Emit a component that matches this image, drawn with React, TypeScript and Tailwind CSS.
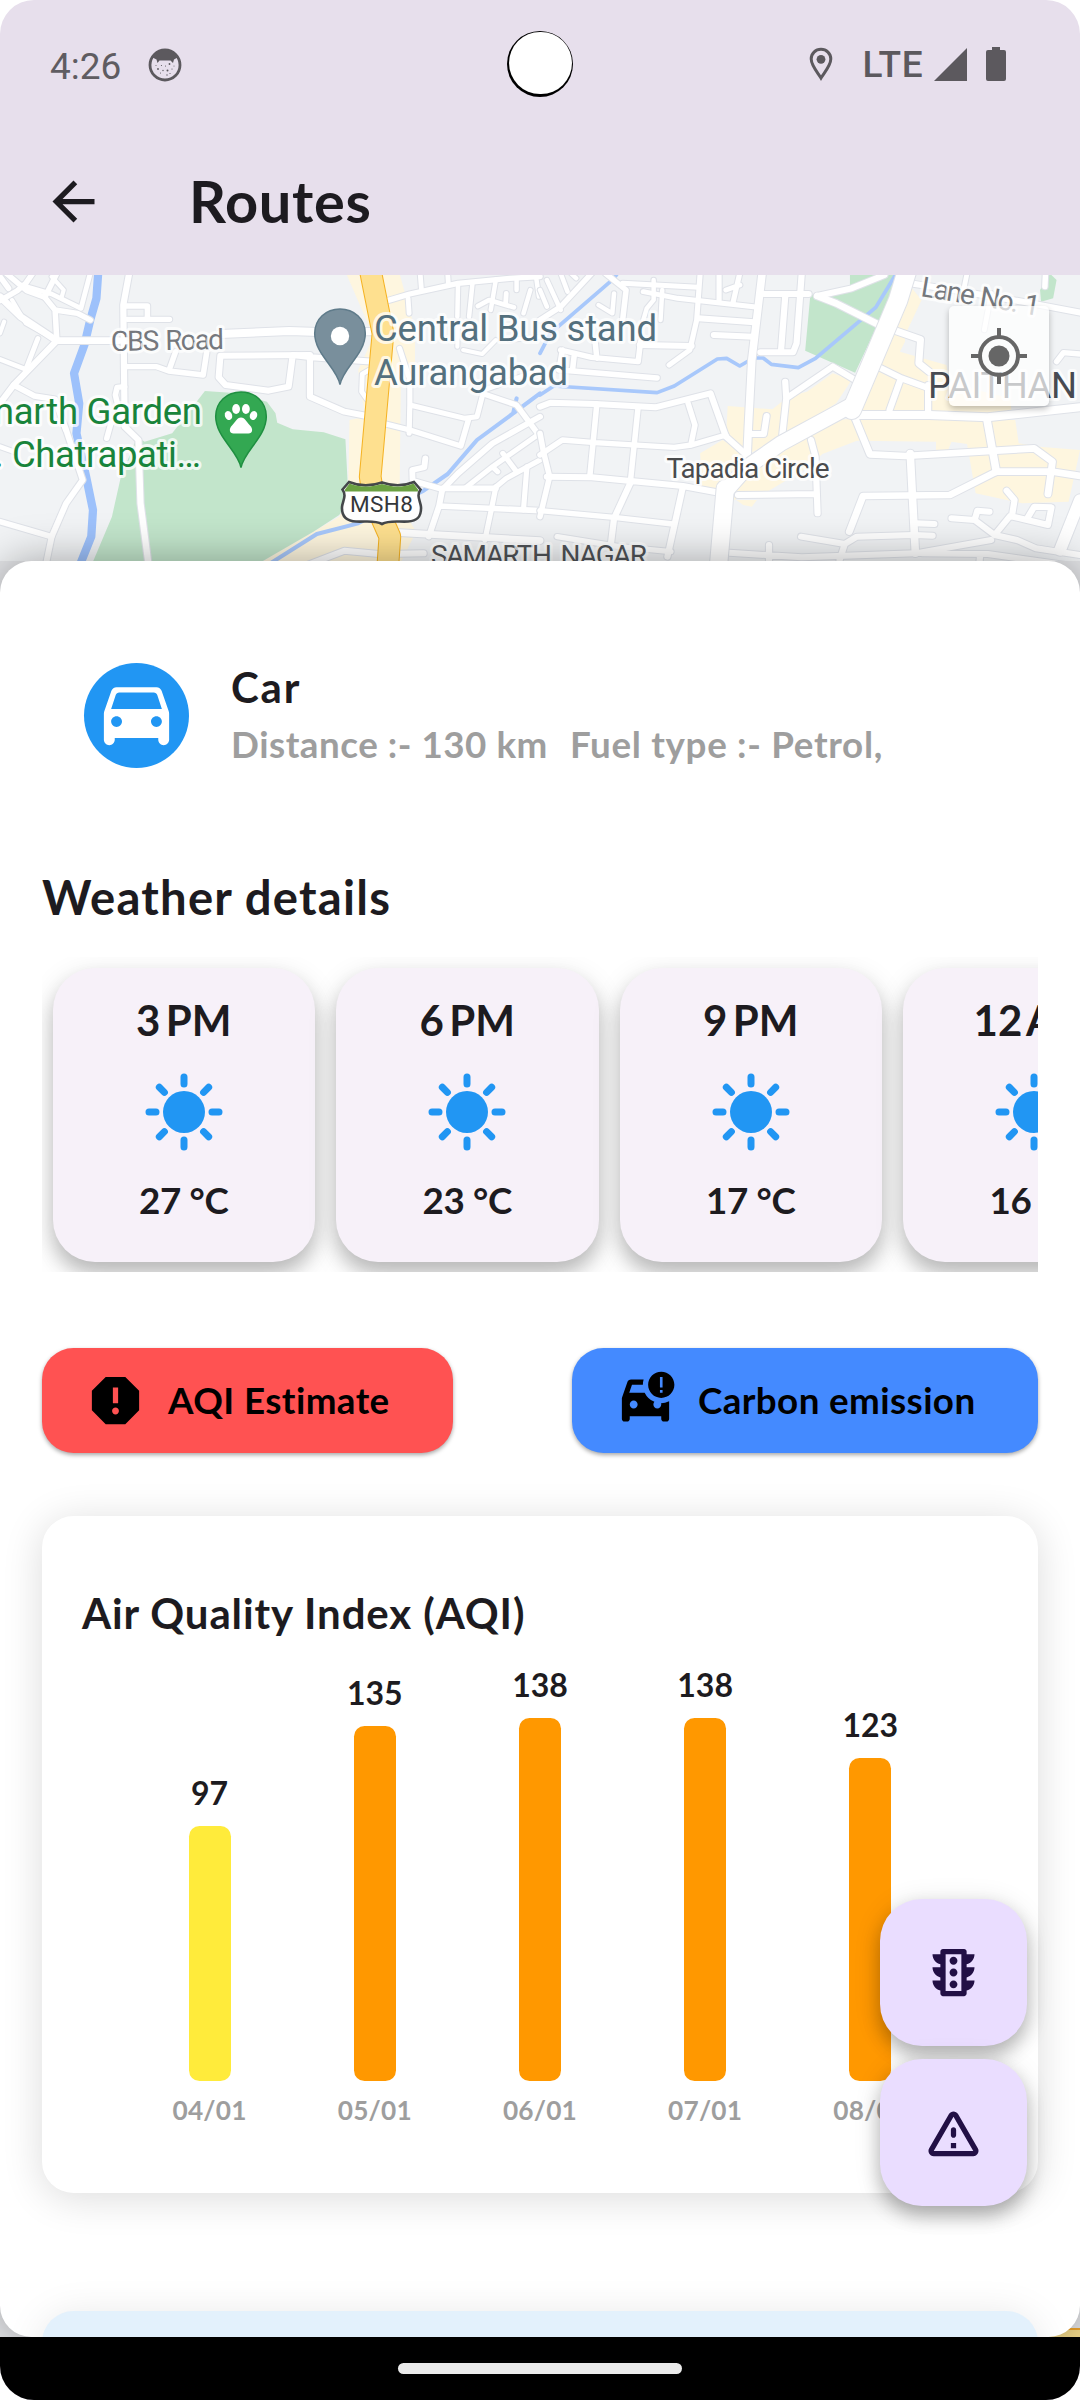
import type { ReactNode } from "react";
import { MdArrowBack, MdCarCrash, MdOutlineTraffic, MdReport } from "react-icons/md";

/* ---------- Map data ---------- */

type Line = [d: string, width: number];

// Tiles are digitised at roughly three units per pixel.
const WEST_ROADS: Line[] = [
  ["M0 80L60 140L165 212L345 212", 20],
  ["M640 192L840 183L925 186", 24],
  ["M1055 185L1095 185", 22],
  ["M0 400L40 345L165 212", 18],
  ["M0 268L75 298L110 205", 14],
  ["M40 345L100 378L160 388L192 480L240 630L192 700L150 800L132 890", 17],
  ["M0 755L150 800", 17],
  ["M0 92L50 62L75 40L95 10", 16],
  ["M18 10L78 62L130 82L165 10", 16],
  ["M60 45L150 72L235 115L262 10", 14],
  ["M0 20L25 55M130 82L160 120L165 212M160 120L225 130L262 150", 16],
  ["M150 20L185 60L178 85M0 190L12 155M35 90L75 160L165 212", 12],
  ["M375 10L358 105L362 470L402 510L408 700L432 890", 18],
  ["M360 108L428 108L428 148M370 148L492 148", 16],
  ["M365 290L455 290L490 303L590 315L600 248M490 303L510 245", 16],
  ["M900 255L640 257L635 322L655 345L780 362L838 350L850 255", 18],
  ["M850 255L905 262L1095 276M900 262L900 380L1000 425L1065 438", 18],
  ["M1072 300L1052 312L1050 365L1066 388", 14],
  ["M362 350L340 352L335 375L350 440L322 460L310 505", 16],
  ["M1125 92L1190 72L1330 40L1480 25L1568 20", 16],
  ["M1220 10L1224 62M1300 10L1302 45M1185 85L1188 130", 14],
  ["M1330 40L1328 140M1372 40L1362 140M1440 28L1425 120M1500 25L1500 60M1540 60L1520 130M1555 10L1565 80", 13],
  ["M1470 70L1468 105L1420 90L1388 108M1468 105L1492 112", 14],
  ["M1345 240L1400 252L1440 210M1330 160L1328 230M1568 200L1480 210", 12],
  ["M1160 235L1190 330L1190 402L1188 490M1190 405L1350 445L1385 440L1405 360L1568 300", 15],
  ["M1120 462L1190 480L1338 528L1360 450", 16],
  ["M1405 372L1500 405L1568 500", 16],
  ["M1235 565L1232 592L1197 600L1198 632L1285 658L1330 610L1430 520L1568 440", 17],
  ["M1350 655L1430 590L1568 490M1430 590L1445 605M1460 550L1500 605M1435 655L1470 625L1568 570", 15],
  ["M1285 655L1440 655M1285 655L1275 708L1245 800M1275 708L1568 722", 17],
  ["M1440 650L1428 712L1408 810M1530 590L1520 720", 15],
  ["M1160 788L1568 812", 20],
  ["M880 890L1000 842L1100 852M1120 852L1230 850", 18],
  ["M190 480L170 420M0 530L40 545", 14],
];

const EAST_ROADS: Line[] = [
  ["M190 10L250 60L240 150M150 10L60 110L0 150", 16],
  ["M0 60L20 110M20 30L60 120M60 10L80 65M90 10L105 25", 13],
  ["M240 40L460 52M300 65L400 85L620 110", 15],
  ["M465 10L455 150L435 240L375 285M520 10L520 90M580 10L560 100M540 60L580 45", 15],
  ["M330 30L330 90L310 115L300 150M215 70L210 130L170 105M355 60L350 150", 13],
  ["M460 145L622 157M505 195L620 200M290 225L440 228", 18],
  ["M645 10L615 270L605 470L600 590", 22],
  ["M650 72L780 72M640 247L735 247L745 220L760 10M712 80L700 240", 18],
  ["M60 240L150 262L285 275L292 215M100 250L95 295M160 215L165 265M60 300L340 324M65 240L55 300", 16],
  ["M0 410L30 398L160 402L335 412L495 370L540 500L605 560", 18],
  ["M0 555L65 510L160 518L390 532L440 525L540 495M430 400L450 465L438 525", 16],
  ["M165 402L145 615M285 410L262 640M0 490L10 545L28 620L0 740", 16],
  ["M20 620L150 622L415 648L540 672M262 640L215 745L205 830M415 650L370 860", 18],
  ["M0 722L215 742L385 762M50 800L230 830L380 845", 16],
  ["M805 78L860 100L985 165L1105 208L1100 280L1130 305", 20],
  ["M805 78L905 55L1000 15", 18],
  ["M1075 40L1200 60L1400 95L1568 128", 18],
  ["M1240 10L1230 60M1310 70L1290 180", 14],
  ["M1468 5L1466 50M1500 275L1520 248L1568 252", 16],
  ["M985 292L1050 325L1130 355M1048 325L1015 420M1127 345L1127 425", 18],
  ["M850 290L915 330M850 290L715 385L703 500M712 335L715 385", 18],
  ["M658 438L650 492L615 492", 18],
  ["M920 435L1130 435L1300 442L1568 412", 24],
  ["M915 445L958 553L1060 558L1435 535L1488 575L1475 672", 20],
  ["M1298 450L1325 605M1075 550L1090 850", 22],
  ["M898 785L938 678L1190 675L1325 605L1490 605L1568 618", 20],
  ["M787 510L800 560L806 730M575 675L800 672", 18],
  ["M1568 690L1510 840", 34],
  ["M758 800L885 822L920 800L1085 795L1140 797M1090 760L1145 762M885 822L870 870", 18],
  ["M1195 745L1262 750L1320 795L1385 810L1440 835L1568 855M1262 750L1270 722L1305 725", 18],
  ["M1320 795L1365 738L1475 765L1485 712L1435 710L1415 745M1370 740L1378 690L1355 662", 18],
  ["M550 848L760 862L1090 850L1310 810M665 825L665 870M1110 850L1300 852L1560 890M1278 855L1275 890", 18],
];

const EAST_ARTERIAL: Line[] = [
  ["M1065 5L1040 90L905 420", 54],
  ["M905 405L870 425L700 520L600 592L540 662", 44],
  ["M538 655L518 890", 50],
];

const WEST_PARKS = [
  "M270 875L325 740L350 625L398 500L420 515L500 490L595 363L690 370L775 395L800 430L805 458L850 478L940 487L1003 508L1012 690L985 735L910 785L760 875Z",
];
const EAST_PARKS = [
  "M900 10L900 60L785 75L770 242L915 308L1050 10Z",
  "M1480 10L1500 30L1490 85L1455 95L1452 60Z",
];
const WEST_COMMERCIAL = [
  "M1005 10L1085 200L1040 300L1060 440L1015 450L1010 700L985 740L760 875L1165 875L1208 785L1160 700L1165 240L1205 330L1205 180L1160 10Z",
];
const EAST_COMMERCIAL = [
  "M1080 55L1108 90L1060 195L1060 215L1045 245L1180 285L1190 340L1365 385L1370 430L1140 430L935 420L1030 170Z",
  "M850 310L905 330L860 400L705 500L600 555L540 500L545 408L675 418L720 380L775 365Z",
  "M930 445L1380 450L1390 520L1450 530L1568 540L1535 695L1400 700L1265 670L1240 522L1195 515L1185 540L1150 540L1150 515L920 512L820 552L780 590L660 665L560 690L470 650L465 550L530 510L610 560L700 520L860 450Z",
  "M570 690L630 690L615 710L590 705Z",
];

const Tile = ({ x, children }: { x: number; children: ReactNode }) => (
  <g transform={`translate(${x} -5) scale(0.34439 0.33333)`} fill="none" strokeLinecap="round" strokeLinejoin="round">
    {children}
  </g>
);

const Roads = ({ lines }: { lines: Line[] }) => (
  <>
    {lines.map(([d, w]) => (
      <path key={`c${d}`} d={d} stroke="#dfe2e8" strokeWidth={w + 6} />
    ))}
    {lines.map(([d, w]) => (
      <path key={`r${d}`} d={d} stroke="#ffffff" strokeWidth={w} />
    ))}
  </>
);

const Pin = ({ x, y, fill, stroke, children }: { x: number; y: number; fill: string; stroke: string; children: ReactNode }) => (
  <g transform={`translate(${x} ${y})`}>
    <path d="M0 49.500C-3 33-25.300 19-25.300-1.500C-25.300-16-14-26 0-26S25.300-16 25.300-1.500C25.300 19 3 33 0 49.500Z" fill={fill} stroke={stroke} strokeWidth="1.500" />
    {children}
  </g>
);

const HALO = "[paint-order:stroke] stroke-white/75 stroke-[6px] [stroke-linejoin:round]";

function MapView() {
  return (
    <svg className="absolute inset-x-0 top-0 h-[286px] w-full font-['Roboto',sans-serif] font-normal" viewBox="0 0 1080 286" preserveAspectRatio="none">
      <rect width="1080" height="286" fill="#f1f3f5" />
      <Tile x={0}>
        {WEST_COMMERCIAL.map((d) => <path key={d} d={d} fill="#fef6df" />)}
        {WEST_PARKS.map((d) => <path key={d} d={d} fill="#c2e5cb" />)}
        <path d="M285 10L280 85L262 150L245 225L215 310L230 400L222 490L250 620L270 720L265 800L230 890" stroke="#9dc1fb" strokeWidth="24" />
        <path d="M785 880L920 792L1040 760L1230 662L1300 612L1385 510L1490 430L1568 370M1500 385L1490 430" stroke="#a8c8fb" strokeWidth="12" />
        <Roads lines={WEST_ROADS} />
        <path d="M1076 5L1112 190L1075 620L1085 690L1132 800L1126 890" stroke="#f5b324" strokeWidth="66" strokeLinecap="butt" />
        <path d="M1076 5L1112 190L1075 620L1085 690L1132 800L1126 890" stroke="#fee08f" strokeWidth="60" strokeLinecap="butt" />
      </Tile>
      <Tile x={540}>
        {EAST_COMMERCIAL.map((d) => <path key={d} d={d} fill="#fef6df" />)}
        {EAST_PARKS.map((d) => <path key={d} d={d} fill="#c2e5cb" />)}
        <path d="M0 375L40 348L340 368L390 348L515 267L542 265L580 288L620 264L648 264L672 283L750 293L800 265L975 112L1035 10M0 250L30 190L215 25L225 10" stroke="#a8c8fb" strokeWidth="11" />
        <Roads lines={EAST_ROADS} />
        <Roads lines={EAST_ARTERIAL} />
      </Tile>

      <g fontSize="28" className={HALO}>
        <text x="111" y="76" fill="#75787d" textLength="113" wordSpacing="3" transform="rotate(-1 112 76)">CBS Road</text>
        <text x="666.500" y="203" fill="#4a4b4d" textLength="163">Tapadia Circle</text>
        <text x="431" y="290" fill="#505357" textLength="216" wordSpacing="5">SAMARTH NAGAR</text>
        <text x="920" y="21" fill="#75787d" textLength="120" wordSpacing="3" transform="rotate(9.500 920 21)">Lane No. 1</text>
      </g>
      <g fontSize="36.500" className={HALO}>
        <text x="374" y="66" fill="#54707e" textLength="283">Central Bus stand</text>
        <text x="374" y="109.500" fill="#54707e" textLength="194">Aurangabad</text>
        <text x="-18" y="149" fill="#19843b" textLength="220">marth Garden</text>
        <text x="-6" y="192" fill="#19843b" textLength="207" xmlSpace="preserve">. Chatrapati…</text>
        <text x="928" y="123" fill="#484b52" textLength="149">PAITHAN</text>
      </g>

      <Pin x={340} y={60} fill="#798f9c" stroke="#5f7b8a"><circle cy="1" r="9.200" fill="#fff" /></Pin>
      <Pin x={241} y={143} fill="#33a852" stroke="#1f8f41">
        <g fill="#fff" transform="translate(0 1.500)">
          <ellipse cx="-4.900" cy="-10.500" rx="3.900" ry="5" />
          <ellipse cx="4.900" cy="-10.500" rx="3.900" ry="5" />
          <ellipse cx="-12.500" cy="-4" rx="3.600" ry="4.600" transform="rotate(-20 -12.500 -4)" />
          <ellipse cx="12.500" cy="-4" rx="3.600" ry="4.600" transform="rotate(20 12.500 -4)" />
          <path d="M0-2C4-2 6 3 9 6C12.500 9.500 11.500 14 7.500 14H-7.500C-11.500 14-12.500 9.500-9 6C-6 3-4-2 0-2Z" />
        </g>
      </Pin>

      <path d="M349 207L342.500 214.500C347 221 342.500 226 342 232C341.500 242 347 246 356 246.500C366 247 375 245 382 249C389 245 398 247 408 246.500C417 246 421.500 242 421 232C420.500 226 416 221 420.500 214.500L414 207C402 212 392 211 382 207.500C372 211 361 212 349 207Z" fill="#fff" stroke="#44474a" strokeWidth="2.600" />
      <path d="M349.500 208.500L345 214.500V216.500H418V214.500L413.500 208.500C402 213 392 212 382 209C372 212 361 213 349.500 208.500Z" fill="#6ba142" />
      <text x="350" y="237" fontSize="22.500" fill="#33363a" textLength="63">MSH8</text>
    </svg>
  );
}

/* ---------- Icons ---------- */

const CarIcon = () => (
  <svg viewBox="0 0 24 24" className="size-[87px] fill-white">
    <path d="M18.920 6.010C18.720 5.420 18.160 5 17.500 5h-11c-.66 0-1.210.42-1.420 1.010L3.110 11.680c-.07.21-.11.43-.11.66v7.160c0 .83.67 1.500 1.500 1.500S6 20.330 6 19.500V19h12v.5c0 .82.67 1.500 1.500 1.500.82 0 1.500-.67 1.500-1.500v-7.160c0-.22-.04-.45-.11-.66l-1.970-5.670zM6.500 16c-.83 0-1.500-.67-1.500-1.500S5.670 13 6.500 13s1.500.67 1.500 1.500S7.330 16 6.500 16zm11 0c-.83 0-1.500-.67-1.500-1.500s.67-1.500 1.500-1.500 1.500.67 1.500 1.500-.67 1.500-1.500 1.500zM5 11l1.270-3.820c.14-.4.52-.68.95-.68h9.560c.43 0 .81.28.95.68L19 11H5z" />
  </svg>
);

const SunIcon = () => (
  <svg viewBox="-12 -12 24 24" className="size-[84px] shrink-0 fill-[#2196f3] stroke-[#2196f3]" strokeLinecap="round" strokeWidth="2">
    <circle r="6" stroke="none" />
    <path d="M0-10V-8M0 8V10M-10 0H-8M8 0H10M-7.050-7.050L-5.600-5.600M7.050-7.050L5.600-5.600M-7.050 7.050L-5.600 5.600M7.050 7.050L5.600 5.600" />
  </svg>
);

const WarningIcon = () => (
  <svg viewBox="0 0 24 24" className="size-[63px] fill-[#220f45]">
    <path d="M12 5.990L19.530 19H4.470L12 5.990M2.740 18c-.77 1.330.19 3 1.730 3h15.060c1.540 0 2.500-1.670 1.730-3L13.730 4.990c-.77-1.330-2.690-1.330-3.460 0L2.740 18zM11 11v2c0 .55.45 1 1 1s1-.45 1-1v-2c0-.55-.45-1-1-1s-1 .45-1 1zm0 5h2v2h-2z" />
  </svg>
);

const FaceIcon = () => (
  <svg viewBox="0 0 34 34" className="size-[34px]">
    <circle cx="17" cy="17" r="15" fill="none" stroke="#5c595e" strokeWidth="2.800" />
    <path d="M4.500 9.500C8 4 12 2 17 2S26 4 29.500 9.500L26 11.500L25 15L22.500 12.500H11.500L9.500 15L8.500 11.500Z" fill="#5c595e" />
    <g fill="#5c595e">
      <circle cx="10" cy="21" r=".9" /><circle cx="13.500" cy="17.500" r=".6" /><circle cx="15" cy="22.500" r=".7" />
      <circle cx="19.500" cy="22.500" r="1" /><circle cx="21.500" cy="16" r=".9" /><circle cx="24" cy="21" r=".6" />
      <circle cx="17.500" cy="18" r=".6" /><circle cx="12.500" cy="25" r=".6" /><circle cx="19" cy="27" r=".7" /><circle cx="8" cy="17.500" r=".5" /><circle cx="26" cy="18" r=".5" /><circle cx="22" cy="25.500" r=".6" />
    </g>
  </svg>
);

const LocateIcon = () => (
  <svg viewBox="-28 -28 56 56" className="size-[56px] stroke-[#666]" strokeWidth="4" fill="none">
    <circle r="19" />
    <circle r="10.500" fill="#666" stroke="none" />
    <path d="M0-28V-20M0 20V28M-28 0H-20M20 0H28" />
  </svg>
);

/* ---------- Sections ---------- */

function StatusBar() {
  return (
    <div className="flex h-[128px] shrink-0 items-start font-['Roboto',sans-serif] text-[37px] leading-[43px] text-[#5f5c61]">
      <div className="ml-[50px] mt-[45px] w-[98px] font-normal">4:26</div>
      <div className="mt-[48px]"><FaceIcon /></div>
      <div className="ml-[325px] mt-[31px] size-[66px] rounded-full bg-black pl-[2px] pt-[0.500px]">
        <div className="size-[62.500px] rounded-full bg-white" />
      </div>
      <svg viewBox="0 0 24 34" className="ml-[236px] mt-[47px] h-[34px] w-[24px]">
        <path d="M12 2.300C6.500 2.300 2.200 6.500 2.200 12C2.200 18.500 9 26 12 31C15 26 21.800 18.500 21.800 12C21.800 6.500 17.500 2.300 12 2.300Z" fill="none" stroke="#5c595e" strokeWidth="3" />
        <circle cx="12" cy="12.300" r="4.400" fill="#5c595e" />
      </svg>
      <div className="ml-[29.500px] mt-[43px] w-[71.500px] font-medium tracking-[0.600px] text-[#5c595e]">LTE</div>
      <svg viewBox="0 0 33 33" className="mt-[47.500px] size-[33px] fill-[#5c595e]"><path d="M33 0V33H0Z" /></svg>
      <svg viewBox="0 0 20 34" className="ml-[19px] mt-[47px] h-[34px] w-[20px] fill-[#5c595e]"><path d="M6 0H14V3H18Q20 3 20 5V32Q20 34 18 34H2Q0 34 0 32V5Q0 3 2 3H6Z" /></svg>
    </div>
  );
}

const WEATHER = [
  { time: "3 PM", temp: "27 °C" },
  { time: "6 PM", temp: "23 °C" },
  { time: "9 PM", temp: "17 °C" },
  { time: "12 AM", temp: "16 °C" },
];

const AQI = [
  { date: "04/01", value: 97, color: "bg-[#ffeb3b]" },
  { date: "05/01", value: 135, color: "bg-[#ff9800]" },
  { date: "06/01", value: 138, color: "bg-[#ff9800]" },
  { date: "07/01", value: 138, color: "bg-[#ff9800]" },
  { date: "08/01", value: 123, color: "bg-[#ff9800]" },
];

function WeatherList() {
  return (
    <div className="mt-[32.500px] flex h-[315px] shrink-0 gap-[21px] overflow-hidden px-[10.500px] py-[10.500px]">
      {WEATHER.map(({ time, temp }) => (
        <div key={time} className="flex h-[294px] w-[262.500px] shrink-0 flex-col items-center rounded-[42px] bg-[#f7f1f9] pt-[27px] shadow-[0_12px_18px_rgba(0,0,0,0.18),0_9px_30px_rgba(0,0,0,0.14)]">
          <div className="whitespace-nowrap text-[42px] leading-[50px] [word-spacing:-5px]">{time}</div>
          <div className="mt-[25.500px] flex"><SunIcon /></div>
          <div className="mt-[23.500px] whitespace-nowrap text-[36.750px] leading-[44px] tracking-[-0.350px]">{temp}</div>
        </div>
      ))}
    </div>
  );
}

function AqiCard() {
  return (
    <div className="mt-[63px] h-[677px] shrink-0 rounded-[31.500px] bg-white pt-[72px] shadow-[0_5px_40px_rgba(0,0,0,0.14)]">
      <div className="pl-[40px] text-[42px] leading-[50px] tracking-[0.880px]">Air Quality Index (AQI)</div>
      <div className="mt-[27px] flex h-[460.500px] items-end pl-[85px]">
        {AQI.map(({ date, value, color }) => (
          <div key={date} className="flex w-[165.200px] shrink-0 flex-col items-center">
            <div className="text-[32px] leading-[40px]">{value}</div>
            <div className={`mt-[13px] w-[42px] rounded-[10.500px] ${color}`} style={{ height: value * 2.625 }} />
            <div className="mt-[13px] text-[26.250px] leading-[32px] tracking-[0.200px] text-[#9e9e9e]">{date}</div>
          </div>
        ))}
      </div>
    </div>
  );
}

const Fab = ({ children }: { children: ReactNode }) => (
  <button className="flex size-[147px] items-center justify-center rounded-[42px] bg-[#eaddff] text-[#220f45] shadow-[0_10px_18px_rgba(0,0,0,0.24),0_4px_28px_rgba(0,0,0,0.12)]">
    {children}
  </button>
);

export default function App() {
  return (
    <div className="h-[2400px] w-[1080px] bg-white">
      <div className="relative flex h-full w-full flex-col overflow-hidden rounded-[34px] bg-[#e7dfec] font-['Lato',sans-serif] font-bold text-[#1d1b20]">
        <StatusBar />
        <header className="flex h-[147px] shrink-0 items-center pl-[42px]">
          <MdArrowBack className="size-[63px]" />
          <h1 className="ml-[84px] pb-[2px] text-[57.750px] leading-[70px] tracking-[0.700px]">Routes</h1>
        </header>

        <main className="relative flex h-[2062px] shrink-0 flex-col overflow-hidden bg-[#e4e5e8]">
          <MapView />
          <div className="absolute bottom-0 right-0 h-[9px] w-[40px] border-t-2 border-[#f0a52c] bg-[#f3da8c]" />
          <button className="absolute right-[31px] top-[31px] flex size-[100px] items-center justify-center rounded-[5px] bg-white/70 shadow-[0_3px_6px_rgba(0,0,0,0.25)]">
            <LocateIcon />
          </button>

          <section className="relative mt-[286px] flex h-[1776px] shrink-0 flex-col overflow-hidden rounded-[31.500px] bg-white px-[42px] pt-[97.500px] shadow-[0_0_44px_rgba(0,0,0,0.34)]">
            <div className="flex h-[114px] shrink-0 items-center pl-[42px]">
              <div className="flex size-[105px] items-center justify-center rounded-full bg-[#2196f3] pb-[7px]"><CarIcon /></div>
              <div className="ml-[42px]">
                <div className="text-[42px] leading-[57px] tracking-[1.800px]">Car</div>
                <div className="flex whitespace-nowrap text-[36.750px] leading-[57px] tracking-[0.520px] text-[#9e9e9e]">
                  <span>Distance :- 130 km</span>
                  <span className="ml-[22px] tracking-[0.680px]">Fuel type :- Petrol,</span>
                </div>
              </div>
            </div>
            <h2 className="mt-[96px] text-[47.250px] leading-[56px] tracking-[1.200px]">Weather details</h2>
            <WeatherList />

            <div className="mt-[76px] flex h-[105px] shrink-0 justify-between whitespace-nowrap text-[36.750px] text-black">
              <button className="flex w-[410.500px] items-center gap-[21px] rounded-[31.500px] bg-[#ff5252] pl-[42px] tracking-[0.420px] shadow-[0_2px_4px_rgba(0,0,0,0.35)]">
                <MdReport className="size-[63px]" />
                AQI Estimate
              </button>
              <button className="flex w-[466px] items-center gap-[21px] rounded-[31.500px] bg-[#448aff] pl-[42px] tracking-[0.400px] shadow-[0_2px_4px_rgba(0,0,0,0.35)]">
                <MdCarCrash className="size-[63px]" />
                Carbon emission
              </button>
            </div>

            <AqiCard />
            <div className="mt-[118px] h-[200px] shrink-0 rounded-[31.500px] bg-[#e3f1fc] shadow-[0_5px_40px_rgba(0,0,0,0.1)]" />
          </section>

          <div className="absolute right-[53px] top-[1624px] flex flex-col gap-[13px]">
            <Fab><MdOutlineTraffic className="size-[63px]" /></Fab>
            <Fab><WarningIcon /></Fab>
          </div>
        </main>

        <nav className="flex h-[63px] shrink-0 items-center justify-center bg-black">
          <div className="h-[11px] w-[284px] rounded-full bg-[#ebebeb]" />
        </nav>
      </div>
    </div>
  );
}
